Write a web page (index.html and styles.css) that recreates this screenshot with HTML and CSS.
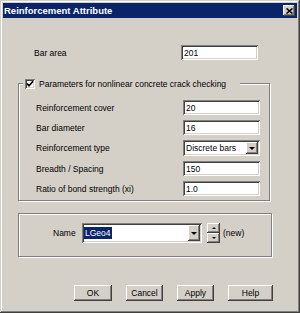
FILE: index.html
```html
<!DOCTYPE html>
<html lang="en">
<head>
    <meta charset="UTF-8">
    <title>Reinforcement Attribute</title>
    <link rel="stylesheet" href="styles.css">
</head>
<body>

    <div class="window">
        <div class="titlebar">
            <span class="title">Reinforcement Attribute</span>
            <span class="close">
                <svg width="7" height="6" viewBox="0 0 7 6"><path d="M0.5 0.5 L6.5 5.5 M6.5 0.5 L0.5 5.5" stroke="#000" stroke-width="1.6" fill="none"/></svg>
            </span>
        </div>

        <div class="row bar-row">
            <span class="label">Bar area</span>
            <div class="field">201</div>
        </div>

        <div class="group params">
            <div class="legend">
                <span class="check">
                    <svg width="8" height="8" viewBox="0 0 8 8"><path d="M1 3.5 L3 5.8 L7 1.2" stroke="#000" stroke-width="1.7" fill="none"/></svg>
                </span>
                Parameters for nonlinear concrete crack checking
            </div>
            <div class="row">
                <span class="label">Reinforcement cover</span>
                <div class="field">20</div>
            </div>
            <div class="row">
                <span class="label">Bar diameter</span>
                <div class="field">16</div>
            </div>
            <div class="row">
                <span class="label">Reinforcement type</span>
                <div class="field select">
                    <span class="value">Discrete bars</span>
                    <span class="drop"><i class="arrow-down"></i></span>
                </div>
            </div>
            <div class="row">
                <span class="label">Breadth / Spacing</span>
                <div class="field">150</div>
            </div>
            <div class="row">
                <span class="label">Ratio of bond strength (xi)</span>
                <div class="field">1.0</div>
            </div>
        </div>

        <div class="group name-group">
            <span class="name-label">Name</span>
            <div class="field combo">
                <span class="value"><span class="selected">LGeo4</span></span>
                <span class="drop"><i class="arrow-down"></i></span>
            </div>
            <div class="spinner">
                <span class="spin"><i class="arrow-up"></i></span>
                <span class="spin"><i class="arrow-down"></i></span>
            </div>
            <span class="new">(new)</span>
        </div>

        <div class="buttons">
            <button class="btn-ok">OK</button>
            <button class="btn-cancel">Cancel</button>
            <button class="btn-apply">Apply</button>
            <button class="btn-help">Help</button>
        </div>
    </div>

</body>
</html>
```

FILE: styles.css
```css
body {
    margin: 0;
    font-family: "Liberation Sans", Arial, sans-serif;
    font-size: 8.5px;
    color: #000;
}

.window {
    width: 300px;
    height: 313px;
    box-sizing: border-box;
    padding: 3px;
    background-color: #d4d0c8;
    box-shadow: inset -1px -1px #404040, inset 1px 1px #d4d0c8,
                inset -2px -2px #808080, inset 2px 2px #fff;
}

.titlebar {
    height: 15px;
    background-color: #0a246a;
    display: flex;
    align-items: center;
    justify-content: space-between;
    padding: 0 2px 0 1px;
}

.title {
    color: #fff;
    font-weight: bold;
    font-size: 9.5px;
}

.close {
    width: 12px;
    height: 11px;
    background-color: #d4d0c8;
    display: flex;
    align-items: center;
    justify-content: center;
    box-shadow: inset -1px -1px #404040, inset 1px 1px #fff,
                inset -2px -2px #808080;
}

.row {
    display: flex;
    align-items: center;
}

.label {
    width: 147px;
}

.bar-row {
    margin: 27px 0 0 31px;
}

.field {
    width: 77px;
    height: 15px;
    box-sizing: border-box;
    padding: 0 3px;
    background-color: #fff;
    display: flex;
    align-items: center;
    box-shadow: inset 1px 1px #808080, inset -1px -1px #fff,
                inset 2px 2px #404040, inset -2px -2px #d4d0c8;
}

.group {
    position: relative;
    box-sizing: border-box;
    margin-left: 15px;
    border: 1px solid #808080;
    box-shadow: inset 1px 1px #fff, 1px 1px #fff;
}

.params {
    width: 252px;
    margin-top: 23px;
    padding: 16px 9px 4px 17px;
    display: flex;
    flex-direction: column;
    gap: 5px;
}

.legend {
    position: absolute;
    top: -7px;
    left: 4px;
    height: 13px;
    padding: 0 14px 0 2px;
    background-color: #d4d0c8;
    display: flex;
    align-items: center;
    gap: 4px;
}

.check {
    width: 10px;
    height: 10px;
    box-sizing: border-box;
    background-color: #fff;
    display: flex;
    align-items: center;
    justify-content: center;
    box-shadow: inset 1px 1px #808080, inset -1px -1px #fff,
                inset 2px 2px #404040, inset -2px -2px #d4d0c8;
}

.select {
    height: 16px;
    padding-right: 2px;
    justify-content: space-between;
}

.drop {
    width: 12px;
    height: 12px;
    background-color: #d4d0c8;
    display: flex;
    align-items: center;
    justify-content: center;
    box-shadow: inset -1px -1px #404040, inset 1px 1px #fff,
                inset -2px -2px #808080;
}

.arrow-down {
    width: 0;
    height: 0;
    border-left: 3px solid transparent;
    border-right: 3px solid transparent;
    border-top: 3px solid #000;
}

.arrow-up {
    width: 0;
    height: 0;
    border-left: 2px solid transparent;
    border-right: 2px solid transparent;
    border-bottom: 2px solid #000;
}

.name-group {
    width: 254px;
    height: 44px;
    margin-top: 12px;
    padding: 9px 0 0 34px;
    display: flex;
    align-items: flex-start;
}

.name-label {
    width: 29px;
    height: 20px;
    line-height: 20px;
}

.combo {
    width: 120px;
    height: 20px;
    padding: 0 2px;
    justify-content: space-between;
}

.combo .drop {
    height: 16px;
}

.selected {
    background-color: #0a246a;
    color: #fff;
    padding: 1px 1px;
}

.spinner {
    margin-left: 5px;
    width: 13px;
    height: 20px;
    display: flex;
    flex-direction: column;
}

.spin {
    flex: 1;
    display: flex;
    align-items: center;
    justify-content: center;
    background-color: #d4d0c8;
    box-shadow: inset -1px -1px #404040, inset 1px 1px #fff,
                inset -2px -2px #808080;
}

.spinner .arrow-down {
    border-left-width: 2px;
    border-right-width: 2px;
    border-top-width: 2px;
}

.new {
    margin-left: 3px;
    height: 20px;
    line-height: 20px;
}

.buttons {
    margin: 28px 0 0 71px;
    display: flex;
    gap: 14px;
}

button {
    height: 16px;
    padding: 0;
    border: none;
    font-family: inherit;
    font-size: 8.5px;
    color: #000;
    background-color: #d4d0c8;
    box-shadow: inset -1px -1px #404040, inset 1px 1px #fff,
                inset -2px -2px #808080;
}

.btn-ok {
    width: 38px;
}

.btn-cancel,
.btn-apply {
    width: 37px;
}

.btn-help {
    width: 45px;
}
```
